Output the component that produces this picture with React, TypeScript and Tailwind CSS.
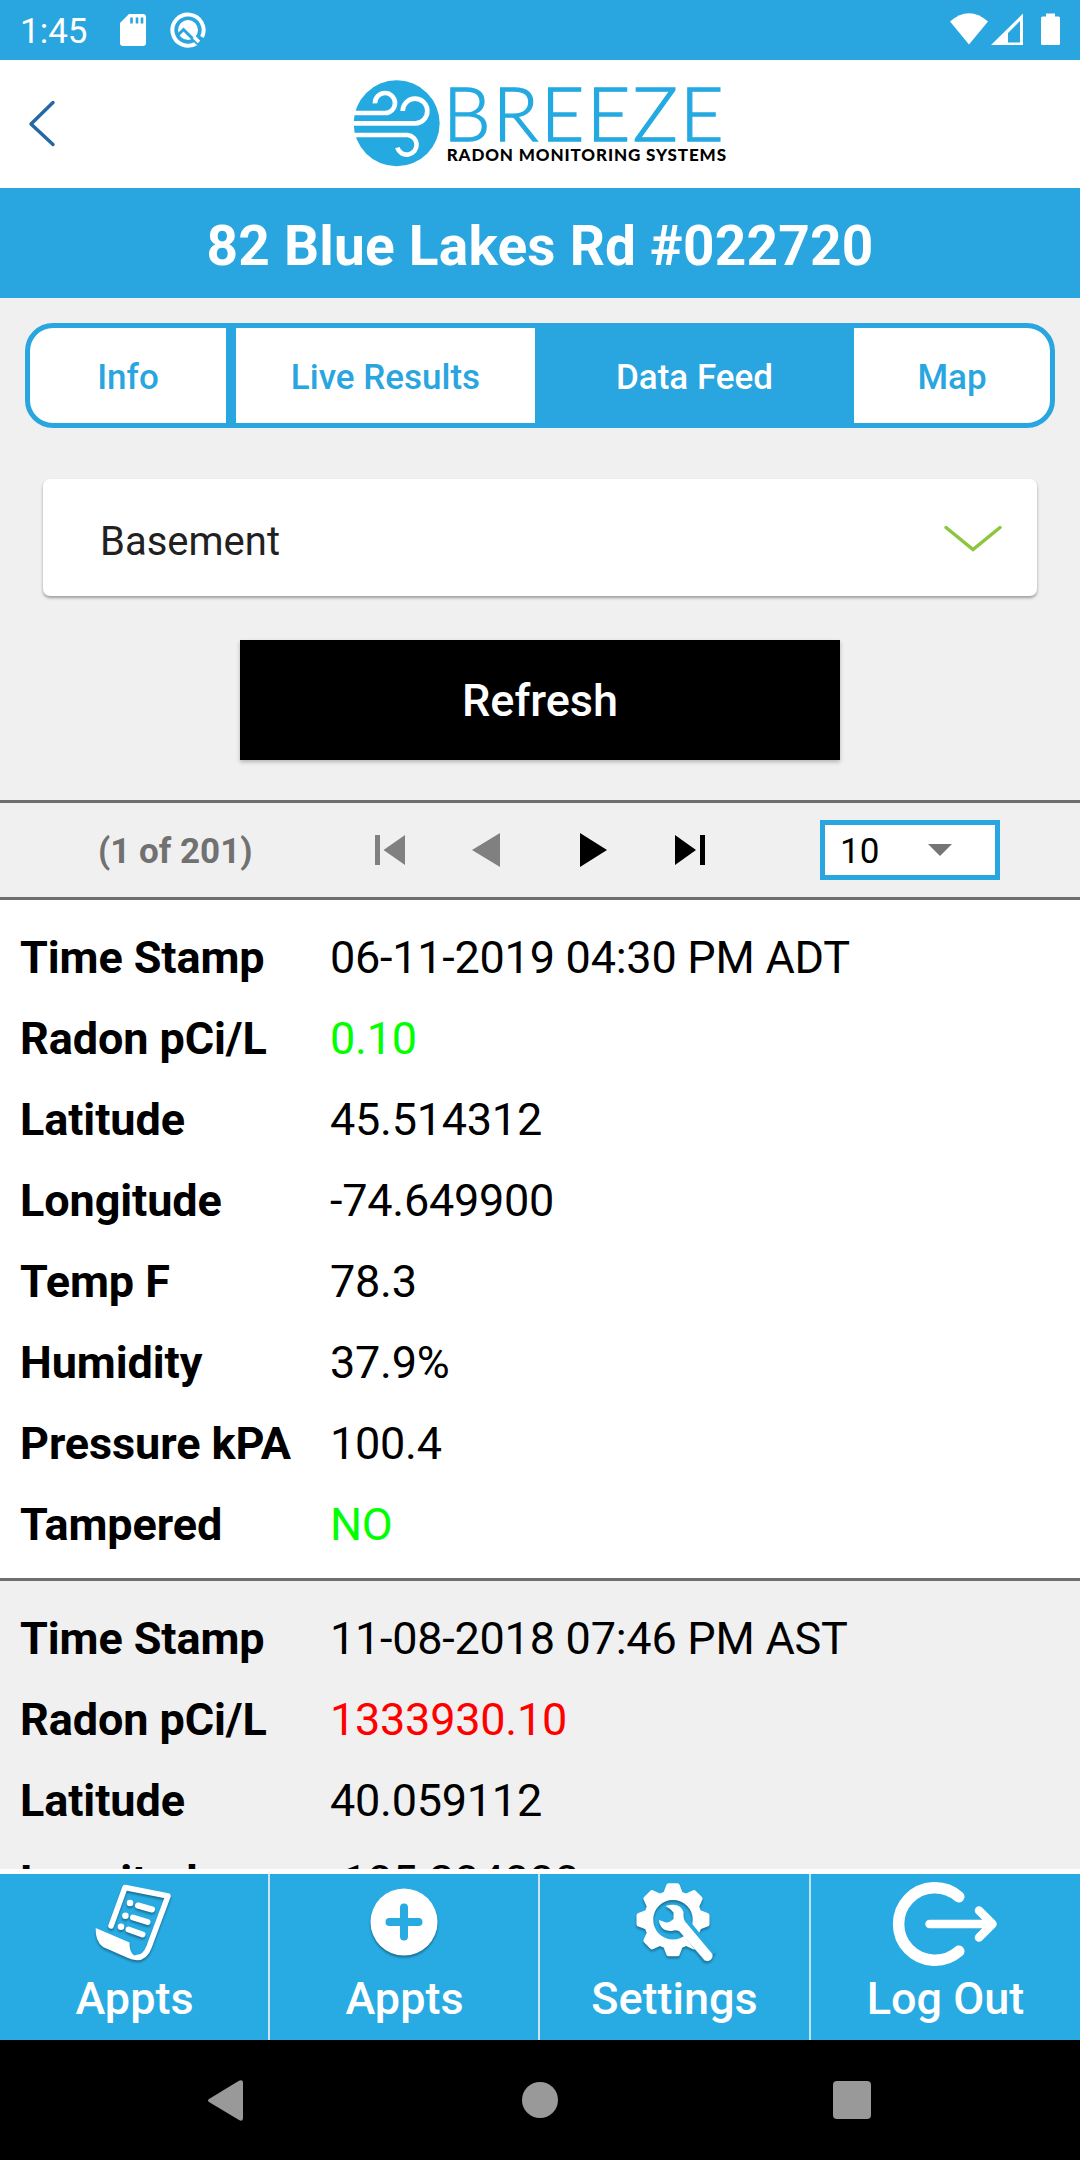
type Row = { label: string; value: string; color?: string };

const readings: Row[][] = [
  [
    { label: "Time Stamp", value: "06-11-2019 04:30 PM ADT" },
    { label: "Radon pCi/L", value: "0.10", color: "text-[#00ff00]" },
    { label: "Latitude", value: "45.514312" },
    { label: "Longitude", value: "-74.649900" },
    { label: "Temp F", value: "78.3" },
    { label: "Humidity", value: "37.9%" },
    { label: "Pressure kPA", value: "100.4" },
    { label: "Tampered", value: "NO", color: "text-[#00ff00]" },
  ],
  [
    { label: "Time Stamp", value: "11-08-2018 07:46 PM AST" },
    { label: "Radon pCi/L", value: "1333930.10", color: "text-[#ff0000]" },
    { label: "Latitude", value: "40.059112" },
    { label: "Longitude", value: "-105.204000" },
  ],
];

const StatusBar = () => (
  <div className="h-[60px] shrink-0 bg-[#29a5df] flex items-center pl-[20px] pr-[20px] text-white">
    <span className="text-[35px] leading-[58px] pt-[3px] w-[100px]">1:45</span>
    <svg width="26" height="32" viewBox="0 0 26 32">
      <path d="M9 0h14a3 3 0 0 1 3 3v26a3 3 0 0 1-3 3H3a3 3 0 0 1-3-3V9z" fill="#fff" />
      <path d="M11.500 3.500v6M17 3.500v6M22 3.500v6" stroke="#29a5df" strokeWidth="2.600" />
    </svg>
    <svg className="ml-[24px]" width="36" height="36" viewBox="0 0 36 36" fill="none">
      <path d="M26.500 31.200A15.600 15.600 0 1 1 32 25" stroke="#fff" strokeWidth="4" />
      <circle cx="18" cy="18" r="10" fill="#fff" />
      <path d="M8 23l5.500-5.500L28 32" stroke="#29a5df" strokeWidth="3" />
      <path d="M24 25l5 5" stroke="#fff" strokeWidth="3.500" />
    </svg>
    <svg className="ml-auto" width="110" height="34" viewBox="0 0 110 34" fill="#fff">
      <path d="M0 8.500Q19-8 38 8.500L19 31.500z" />
      <path fillRule="evenodd" d="M73 0.500V32H41zM70 8L58 20V29.500H70z" />
      <path d="M96 0.500h9v3h3.500a1.500 1.500 0 0 1 1.500 1.500v25.500a1.500 1.500 0 0 1-1.500 1.500h-16a1.500 1.500 0 0 1-1.500-1.500V5a1.500 1.500 0 0 1 1.500-1.500H96z" />
    </svg>
  </div>
);

const Logo = () => (
  <svg width="380" height="92" viewBox="30 53 1140 276" fill="none">
    <circle cx="170" cy="189" r="129" fill="#25a9e1" />
    <g stroke="#fff" strokeWidth="14">
      <path d="M36 158H135A30 30 0 1 0 105 129" />
      <path d="M36 189H226A37 37 0 1 0 188 152" />
      <path d="M36 224H202A29.500 29.500 0 1 1 172 262" />
    </g>
    <text x="309" y="241" fontFamily="Lato" fontWeight="300" fontSize="226" fill="#25a9e1" stroke="#25a9e1" strokeWidth="4" textLength="842" lengthAdjust="spacing">
      BREEZE
    </text>
    <text x="320" y="301" fontFamily="Lato" fontWeight="900" fontSize="51" fill="#000" textLength="838" lengthAdjust="spacing">
      RADON MONITORING SYSTEMS
    </text>
  </svg>
);

const Header = () => (
  <header className="h-[128px] shrink-0 bg-white flex items-center">
    <svg className="ml-[28px]" width="30" height="50" viewBox="0 0 30 50" fill="none">
      <path d="M25 3.500L3 25l22 20.500" stroke="#2668a5" strokeWidth="3.500" strokeLinecap="round" strokeLinejoin="round" />
    </svg>
    <div className="ml-[292px]">
      <Logo />
    </div>
  </header>
);

const Tabs = () => (
  <div className="mx-[25px] mt-[25px] h-[105px] flex rounded-[28px] overflow-hidden border-[5px] border-[#29a5df] bg-white text-[#29a5df] text-[35px] font-medium leading-[99px] text-center">
    <div className="w-[196px]">Info</div>
    <div className="w-[309px] border-l-[10px] border-[#29a5df]">Live Results</div>
    <div className="w-[319px] bg-[#29a5df] text-white">Data Feed</div>
    <div className="flex-1">Map</div>
  </div>
);

const Pager = () => (
  <div className="mt-[40px] h-[100px] border-y-[3px] border-[#6e6e6e] flex items-center">
    <span className="ml-[98px] w-[277px] pt-[5px] text-[35px] font-bold text-[#717171]">(1 of 201)</span>
    <div className="w-[445px] flex items-center">
      <svg width="30" height="30" fill="#808080">
        <path d="M0 0h5v30H0zM30 0v30L8.500 15z" />
      </svg>
      <svg className="ml-[67px]" width="28" height="34" fill="#808080">
        <path d="M28 0v34L0 17z" />
      </svg>
      <svg className="ml-[80px]" width="27" height="34">
        <path d="M0 0v34L27 17z" />
      </svg>
      <svg className="ml-[68px]" width="30" height="30">
        <path d="M0 0v30L21 15zM25 0h5v30h-5z" />
      </svg>
    </div>
    <div className="w-[180px] h-[60px] bg-white border-[5px] border-[#29a5df] flex items-center pl-[15px] pr-[43px] justify-between text-[35px] text-black">
      <span className="pt-[4px]">10</span>
      <svg width="24" height="12" fill="#757575">
        <path d="M0 0h24L12 12z" />
      </svg>
    </div>
  </div>
);

const Reading = ({ rows, className }: { rows: Row[]; className: string }) => (
  <div className={className}>
    {rows.map((row) => (
      <div key={row.label} className="h-[81px] flex items-center text-[45px] leading-[81px] tracking-[-0.25px] whitespace-nowrap">
        <span className="w-[310px] font-bold tracking-[-0.1px]">{row.label}</span>
        <span className={row.color}>{row.value}</span>
      </div>
    ))}
  </div>
);

const ApptsIcon = () => (
  <svg className="ml-[2px]" width="90" height="90" viewBox="0 0 90 90" fill="none" stroke="#fff" strokeLinecap="round" strokeLinejoin="round">
    <path d="M21 46L35 7.500L78 16L59 67Q55 77.500 47 77.500" strokeWidth="5.500" />
    <path d="M5.700 48L39.500 62.500Q39.500 76 48 76.500V80Q43 80.500 38 78L13 67Q5 61 5.700 48z" fill="#fff" stroke="none" />
    <path d="M48 25.500l14 4M43 37.500l14.500 4.500M38.500 49.500l14 5" strokeWidth="6" />
    <path d="M40 23h.01M35.400 35.700h.01M31 46.700h.01" strokeWidth="6.500" />
  </svg>
);

const AddIcon = () => (
  <svg width="90" height="90" viewBox="0 0 90 90">
    <circle cx="45" cy="42" r="33.500" fill="#fff" />
    <path d="M45 27.500v29M30.500 42h29" stroke="#28aae2" strokeWidth="8" strokeLinecap="round" />
  </svg>
);

const SettingsIcon = () => (
  <svg width="90" height="90" viewBox="0 0 90 90">
    <g transform="translate(43 39.700)">
      <circle r="24.500" fill="none" stroke="#fff" strokeWidth="9.500" />
      {[0, 45, 90, 135, 180, 225, 270, 315].map((angle) => (
        <path key={angle} transform={`rotate(${angle})`} d="M-10-26L-7-34Q-6.500-36.500-4.500-36.500H4.500Q6.500-36.500 7-34L10-26z" fill="#fff" />
      ))}
    </g>
    <path d="M54 45L80 77" stroke="#28aae2" strokeWidth="14" />
    <path
      d="M35.500 26Q50 21.500 53.500 32Q53 39 55.500 42L81.500 73Q84 76 81 79.500Q77.500 82.500 74.500 80L49.500 51.500Q46 49.500 42 51Q30 51.500 29 40L36 42.500Q39 43 43.500 39V32.500Q41 29 35.500 26z"
      fill="#fff"
    />
  </svg>
);

const LogOutIcon = () => (
  <svg width="110" height="90" viewBox="0 0 110 90" fill="none" stroke="#fff" strokeLinecap="round" strokeLinejoin="round">
    <path d="M67.800 16.700A36.300 36.300 0 1 0 67.800 71.300" strokeWidth="11.500" />
    <path d="M38.500 44H101M88 30.500L101.500 44L88 57.500" strokeWidth="8.500" />
  </svg>
);

const BottomTabs = () => (
  <nav className="h-[171px] shrink-0 border-t-[5px] border-white bg-[#28aae2] flex text-white text-[45px] font-medium text-center">
    <div className="w-[270px] border-r-2 border-[#cfe3ee] flex flex-col items-center pt-[6px]">
      <div className="h-[90px] drop-shadow-[0_2px_1px_rgba(0,0,0,0.35)]"><ApptsIcon /></div>
      <span className="leading-[58px] pl-[1px]">Appts</span>
    </div>
    <div className="w-[270px] border-r-2 border-[#cfe3ee] flex flex-col items-center pt-[6px]">
      <div className="h-[90px] drop-shadow-[0_2px_1px_rgba(0,0,0,0.35)]"><AddIcon /></div>
      <span className="leading-[58px] pl-[1px]">Appts</span>
    </div>
    <div className="w-[271px] border-r-2 border-[#bfe6f6] flex flex-col items-center pt-[6px]">
      <div className="h-[90px] drop-shadow-[0_2px_1px_rgba(0,0,0,0.35)]"><SettingsIcon /></div>
      <span className="leading-[58px]">Settings</span>
    </div>
    <div className="flex-1 flex flex-col items-center pt-[6px]">
      <div className="h-[90px]"><LogOutIcon /></div>
      <span className="leading-[58px]">Log Out</span>
    </div>
  </nav>
);

const SystemNav = () => (
  <div className="h-[120px] shrink-0 bg-black flex items-center">
    <svg className="ml-[208px]" width="35" height="41" fill="#999">
      <path d="M31 .7Q35-1 35 3v35Q35 42 31 40L1 22Q-1 20.500 1 19z" />
    </svg>
    <div className="ml-[279px] w-[36px] h-[36px] rounded-full bg-[#999]" />
    <div className="ml-[275px] w-[38px] h-[38px] rounded-[4px] bg-[#999]" />
  </div>
);

const App = () => {
  return (
    <div className="w-[1080px] h-[2160px] flex flex-col overflow-hidden bg-[#f0f0f0] font-[Roboto,sans-serif] text-black">
      <StatusBar />
      <Header />
      <h1 className="h-[110px] shrink-0 bg-[#29a5df] text-white text-[55px] font-bold leading-[117px] tracking-[0.2px] text-center">
        82 Blue Lakes Rd #022720
      </h1>
      <main className="flex-1 min-h-0 overflow-hidden">
        <Tabs />
        <div className="mx-[43px] mt-[51px] h-[117px] rounded-[7px] bg-white shadow-[0_2px_3px_rgba(0,0,0,0.35)] flex items-center justify-between pl-[57px] pr-[34px]">
          <span className="text-[40px] leading-[60px] pt-[8px] text-[#212121]">Basement</span>
          <svg width="60" height="28" viewBox="0 0 60 28" fill="none">
            <path d="M3 3.500l27 22L57 3.500" stroke="#8cc63f" strokeWidth="3.500" strokeLinecap="round" />
          </svg>
        </div>
        <button className="block mx-auto mt-[44px] w-[600px] h-[120px] bg-black text-white text-[45px] font-medium leading-[118px] pt-[2px] shadow-[0_2px_4px_rgba(0,0,0,0.25)]">
          Refresh
        </button>
        <Pager />
        <Reading rows={readings[0]} className="bg-white pl-[20px] pt-[17px] pb-[13px] border-b-[3px] border-[#6e6e6e]" />
        <Reading rows={readings[1]} className="pl-[20px] pt-[17px]" />
      </main>
      <BottomTabs />
      <SystemNav />
    </div>
  );
};

export default App;
